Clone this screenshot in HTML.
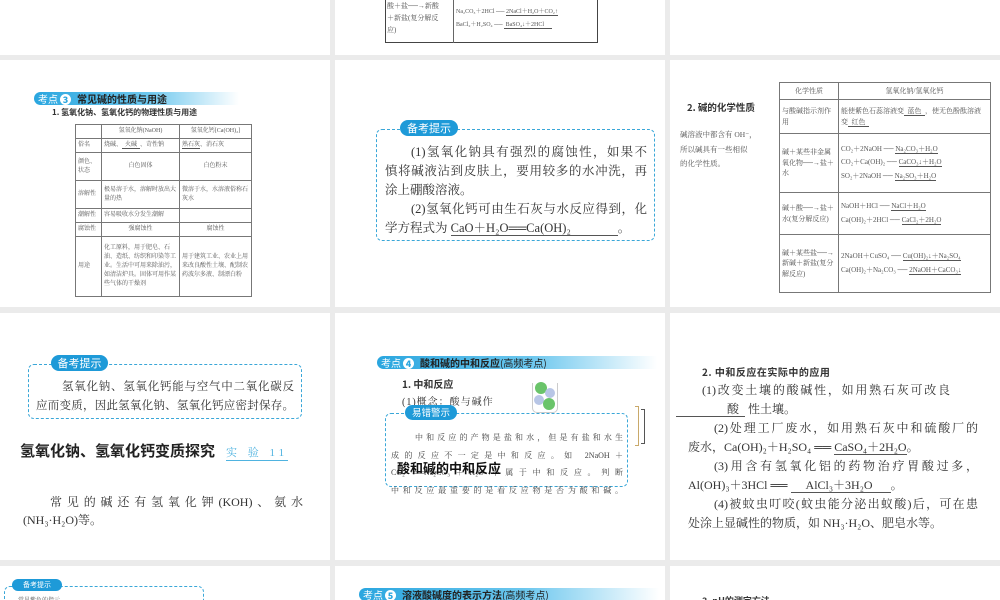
<!DOCTYPE html>
<html><head><meta charset="utf-8">
<style>
*{margin:0;padding:0;box-sizing:border-box}
body{width:1000px;height:600px;background:#ebebeb;position:relative;overflow:hidden;font-family:"Liberation Serif","Noto Serif CJK SC","Noto Sans CJK SC",serif;color:#333}
.s{position:absolute;background:#fff;overflow:hidden;width:330px}
.t{position:absolute;white-space:nowrap}
.j{position:absolute}
.j div{text-align:justify;text-align-last:justify;white-space:nowrap}
.j div.l{text-align-last:left}
.bar{position:absolute;height:13px;border-radius:7px 0 0 7px;background:linear-gradient(90deg,#2aa6df 0%,#6cc7ee 55%,rgba(255,255,255,0) 100%);font-family:"Noto Sans CJK SC",sans-serif;font-weight:bold;font-size:10px;line-height:13px;color:#222;padding-left:4px}
.bar i{font-style:normal;color:#fff;font-weight:normal}
.bar b{display:inline-block;width:11px;height:11px;border-radius:50%;background:#fff;color:#2aa6df;text-align:center;line-height:11px;font-size:9px;margin:0 6px 0 2px}
.box{position:absolute;border:1px dashed #3aa7d8;border-radius:6px}
.lab{position:absolute;background:#1e9ad8;color:#fff;border-radius:8px;font-family:"Noto Sans CJK SC",sans-serif;text-align:center}
table{position:absolute;border-collapse:collapse;border:1.5px solid #444;font-size:6px;color:#555}
td{border:1px solid #777;padding:1px 2px;vertical-align:middle;line-height:1.5}
.u{border-bottom:1px solid #555}
</style></head><body>

<!-- row 1 -->
<div class="s" style="left:0;top:0;height:55px"></div>
<div class="s" style="left:335px;top:0;height:55px">
  <div style="position:absolute;left:50px;top:-2px;width:213px;height:45px;border:1.5px solid #444;border-top:none"></div>
  <div style="position:absolute;left:118px;top:0;width:1px;height:43px;background:#666"></div>
  <div class="t" style="left:52px;top:0;font-size:7px;line-height:12px;color:#555">酸＋盐──→新酸<br>＋新盐(复分解反<br>应)</div>
  <div class="t" style="left:121px;top:6px;font-size:6px;line-height:13px;color:#555">Na₂CO₃＋2HCl ── <span class="u">2NaCl＋H₂O＋CO₂↑</span><br>BaCl₂＋H₂SO₄ ── <span class="u">&nbsp;BaSO₄↓＋2HCl&nbsp;&nbsp;&nbsp;&nbsp;&nbsp;</span></div>
</div>
<div class="s" style="left:670px;top:0;height:55px"></div>

<!-- row 2 -->
<div class="s" style="left:0;top:60px;height:247px">
  <div class="bar" style="left:34px;top:32px;width:205px"><i>考点</i><b>3</b>常见碱的性质与用途</div>
  <div class="t" style="left:52px;top:47px;font-size:8px;font-weight:bold;font-family:'Noto Sans CJK SC',sans-serif">1. 氢氧化钠、氢氧化钙的物理性质与用途</div>
  <table style="left:75px;top:64px;width:177px;height:173px">
    <tr style="height:14px"><td style="width:26px"></td><td style="width:78px;text-align:center">氢氧化钠(NaOH)</td><td style="text-align:center">氢氧化钙[Ca(OH)₂]</td></tr>
    <tr style="height:14px"><td>俗名</td><td>烧碱、<span class="u">&nbsp;&nbsp;火碱&nbsp;&nbsp;</span>、苛性钠</td><td><span class="u">熟石灰</span>、消石灰</td></tr>
    <tr style="height:28px"><td>颜色、状态</td><td style="text-align:center">白色固体</td><td style="text-align:center">白色粉末</td></tr>
    <tr style="height:28px"><td>溶解性</td><td>极易溶于水，溶解时放出大量的热</td><td>微溶于水，水溶液俗称石灰水</td></tr>
    <tr style="height:14px"><td>潮解性</td><td>容易吸收水分发生潮解</td><td></td></tr>
    <tr style="height:14px"><td>腐蚀性</td><td style="text-align:center">强腐蚀性</td><td style="text-align:center">腐蚀性</td></tr>
    <tr><td>用途</td><td>化工原料，用于肥皂、石油、造纸、纺织和印染等工业。生活中可用来除油污，如清洁炉具。固体可用作某些气体的干燥剂</td><td>用于建筑工业、农业上用来改良酸性土壤、配制农药波尔多液、制漂白粉</td></tr>
  </table>
</div>
<div class="s" style="left:335px;top:60px;height:247px">
  <div class="box" style="left:41px;top:69px;width:279px;height:112px"></div>
  <div class="lab" style="left:65px;top:60px;width:58px;height:16px;font-size:11px;line-height:16px">备考提示</div>
  <div class="j" style="left:50px;top:83px;width:262px;font-size:12.5px;line-height:19px;color:#333">
    <div style="padding-left:26px">(1)氢氧化钠具有强烈的腐蚀性，如果不</div>
    <div>慎将碱液沾到皮肤上，要用较多的水冲洗，再</div>
    <div class="l">涂上硼酸溶液。</div>
    <div style="padding-left:26px">(2)氢氧化钙可由生石灰与水反应得到，化</div>
    <div class="l">学方程式为 <span class="u">CaO＋H₂O══Ca(OH)₂&nbsp;&nbsp;&nbsp;&nbsp;&nbsp;&nbsp;&nbsp;&nbsp;&nbsp;&nbsp;&nbsp;&nbsp;&nbsp;&nbsp;&nbsp;</span>。</div>
  </div>
</div>
<div class="s" style="left:670px;top:60px;height:247px">
  <div class="t" style="left:17px;top:40px;font-size:9.5px;font-weight:bold;font-family:'Noto Sans CJK SC',sans-serif">2. 碱的化学性质</div>
  <div class="t" style="left:10px;top:68px;font-size:7.5px;line-height:14.5px;color:#555">碱溶液中都含有 OH⁻，<br>所以碱具有一些相似<br>的化学性质。</div>
  <table style="left:109px;top:22px;width:212px;height:211px;font-size:7px">
    <tr style="height:17px"><td style="width:59px;text-align:center">化学性质</td><td style="text-align:center">氢氧化钠/氢氧化钙</td></tr>
    <tr style="height:34px"><td>与酸碱指示剂作用</td><td>能使紫色石蕊溶液变<span class="u">&nbsp;&nbsp;蓝色&nbsp;&nbsp;</span>，使无色酚酞溶液变<span class="u">&nbsp;&nbsp;红色&nbsp;&nbsp;</span></td></tr>
    <tr style="height:59px"><td>碱＋某些非金属氧化物──→盐＋水</td><td style="line-height:1.9">CO₂＋2NaOH ── <span class="u">Na₂CO₃＋H₂O</span><br>CO₂＋Ca(OH)₂ ── <span class="u">CaCO₃↓＋H₂O</span><br>SO₂＋2NaOH ── <span class="u">Na₂SO₃＋H₂O</span></td></tr>
    <tr style="height:42px"><td>碱＋酸──→盐＋水(复分解反应)</td><td style="line-height:1.9">NaOH＋HCl ── <span class="u">NaCl＋H₂O</span><br>Ca(OH)₂＋2HCl ── <span class="u">CaCl₂＋2H₂O</span></td></tr>
    <tr><td>碱＋某些盐──→新碱＋新盐(复分解反应)</td><td style="line-height:1.9">2NaOH＋CuSO₄ ── <span class="u">Cu(OH)₂↓＋Na₂SO₄</span><br>Ca(OH)₂＋Na₂CO₃ ── <span class="u">2NaOH＋CaCO₃↓</span></td></tr>
  </table>
</div>

<!-- row 3 -->
<div class="s" style="left:0;top:313px;height:247px">
  <div class="box" style="left:28px;top:51px;width:274px;height:55px"></div>
  <div class="lab" style="left:51px;top:42px;width:57px;height:16px;font-size:11px;line-height:16px">备考提示</div>
  <div class="j" style="left:36px;top:65px;width:258px;font-size:11.5px;line-height:19px">
    <div style="padding-left:26px">氢氧化钠、氢氧化钙能与空气中二氧化碳反</div>
    <div>应而变质，因此氢氧化钠、氢氧化钙应密封保存。</div>
  </div>
  <div class="t" style="left:20px;top:127px;font-size:15px;font-weight:bold;font-family:'Noto Sans CJK SC',sans-serif;color:#222">氢氧化钠、氢氧化钙变质探究</div>
  <div class="t" style="left:226px;top:131px;font-size:11px;color:#4fb3e0;letter-spacing:4px;border-bottom:1px solid #4fb3e0">实 验 11</div>
  <div class="j" style="left:23px;top:180px;width:280px;font-size:12px;line-height:18px">
    <div style="padding-left:27px">常见的碱还有氢氧化钾(KOH)、氨水</div>
    <div class="l">(NH₃·H₂O)等。</div>
  </div>
</div>
<div class="s" style="left:335px;top:313px;height:247px">
  <div class="bar" style="left:42px;top:43px;width:280px"><i>考点</i><b>4</b>酸和碱的中和反应<span style="font-weight:normal">(高频考点)</span></div>
  <div class="t" style="left:67px;top:63px;font-size:10px;font-weight:bold;font-family:'Noto Sans CJK SC',sans-serif">1. 中和反应</div>
  <div class="t" style="left:67px;top:80px;font-size:10px;letter-spacing:1px">(1)概念：酸与碱作</div>
  <div style="position:absolute;left:197px;top:70px;width:26px;height:30px;border:1px solid #ccc;border-top:none;border-radius:0 0 5px 5px"></div>
  <div style="position:absolute;left:200px;top:69px;width:12px;height:12px;border-radius:50%;background:#6ac46a"></div>
  <div style="position:absolute;left:210px;top:75px;width:10px;height:10px;border-radius:50%;background:#b8c6e6"></div>
  <div style="position:absolute;left:199px;top:82px;width:10px;height:10px;border-radius:50%;background:#b8c6e6"></div>
  <div style="position:absolute;left:208px;top:85px;width:12px;height:12px;border-radius:50%;background:#6ac46a"></div>
  <div class="box" style="left:50px;top:100px;width:243px;height:74px"></div>
  <div class="lab" style="left:70px;top:92px;width:52px;height:15px;font-size:9.5px;line-height:15px">易错警示</div>
  <div style="position:absolute;left:300px;top:93px;width:4px;height:40px;border:1px solid #c9a96a;border-left:none"></div>
  <div style="position:absolute;left:306px;top:96px;width:4px;height:35px;border:1.5px solid #555;border-left:none"></div>
  <div class="j" style="left:56px;top:116px;width:232px;font-size:8px;line-height:17.5px;color:#444">
    <div style="padding-left:24px">中和反应的产物是盐和水，但是有盐和水生</div>
    <div>成的反应不一定是中和反应。如 2NaOH＋</div>
    <div>CO₂ ══Na₂CO₃＋H₂O 不属于中和反应。判断</div>
    <div>中和反应最重要的是看反应物是否为酸和碱。</div>
  </div>
  <div class="t" style="left:62px;top:145px;font-size:13px;font-weight:bold;font-family:'Noto Sans CJK SC',sans-serif;color:#111">酸和碱的中和反应</div>
</div>
<div class="s" style="left:670px;top:313px;height:247px">
  <div class="t" style="left:32px;top:51px;font-size:10px;font-weight:bold;font-family:'Noto Sans CJK SC',sans-serif;letter-spacing:0.5px">2. 中和反应在实际中的应用</div>
  <div class="j" style="left:18px;top:68px;width:290px;font-size:12px;line-height:19px;color:#333">
    <div style="padding-left:14px;width:262px">(1)改变土壤的酸碱性，如用熟石灰可改良</div>
    <div class="l" style="margin-left:-12px"><span class="u">&nbsp;&nbsp;&nbsp;&nbsp;&nbsp;&nbsp;&nbsp;&nbsp;&nbsp;&nbsp;&nbsp;&nbsp;&nbsp;&nbsp;&nbsp;&nbsp;&nbsp;酸&nbsp;&nbsp;</span> 性土壤。</div>
    <div style="padding-left:26px">(2)处理工厂废水，如用熟石灰中和硫酸厂的</div>
    <div class="l">废水，Ca(OH)₂＋H₂SO₄ ══ <span class="u">CaSO₄＋2H₂O</span>。</div>
    <div style="padding-left:26px">(3)用含有氢氧化铝的药物治疗胃酸过多，</div>
    <div class="l">Al(OH)₃＋3HCl ══ <span class="u">&nbsp;&nbsp;&nbsp;&nbsp;&nbsp;AlCl₃＋3H₂O&nbsp;&nbsp;&nbsp;&nbsp;&nbsp;&nbsp;</span>。</div>
    <div style="padding-left:26px">(4)被蚊虫叮咬(蚊虫能分泌出蚁酸)后，可在患</div>
    <div class="l">处涂上显碱性的物质，如 NH₃·H₂O、肥皂水等。</div>
  </div>
</div>

<!-- row 4 -->
<div class="s" style="left:0;top:566px;height:34px">
  <div class="box" style="left:4px;top:20px;width:200px;height:30px"></div>
  <div class="lab" style="left:12px;top:13px;width:50px;height:12px;font-size:7px;line-height:12px">备考提示</div>
  <div class="t" style="left:18px;top:29px;font-size:6px;color:#555">常见紫色的指示</div>
</div>
<div class="s" style="left:335px;top:566px;height:34px">
  <div class="bar" style="left:24px;top:22px;width:300px"><i>考点</i><b>5</b>溶液酸碱度的表示方法<span style="font-weight:normal">(高频考点)</span></div>
</div>
<div class="s" style="left:670px;top:566px;height:34px">
  <div class="t" style="left:32px;top:28px;font-size:9px;font-weight:bold;font-family:'Noto Sans CJK SC',sans-serif">3. pH的测定方法</div>
</div>
</body></html>
